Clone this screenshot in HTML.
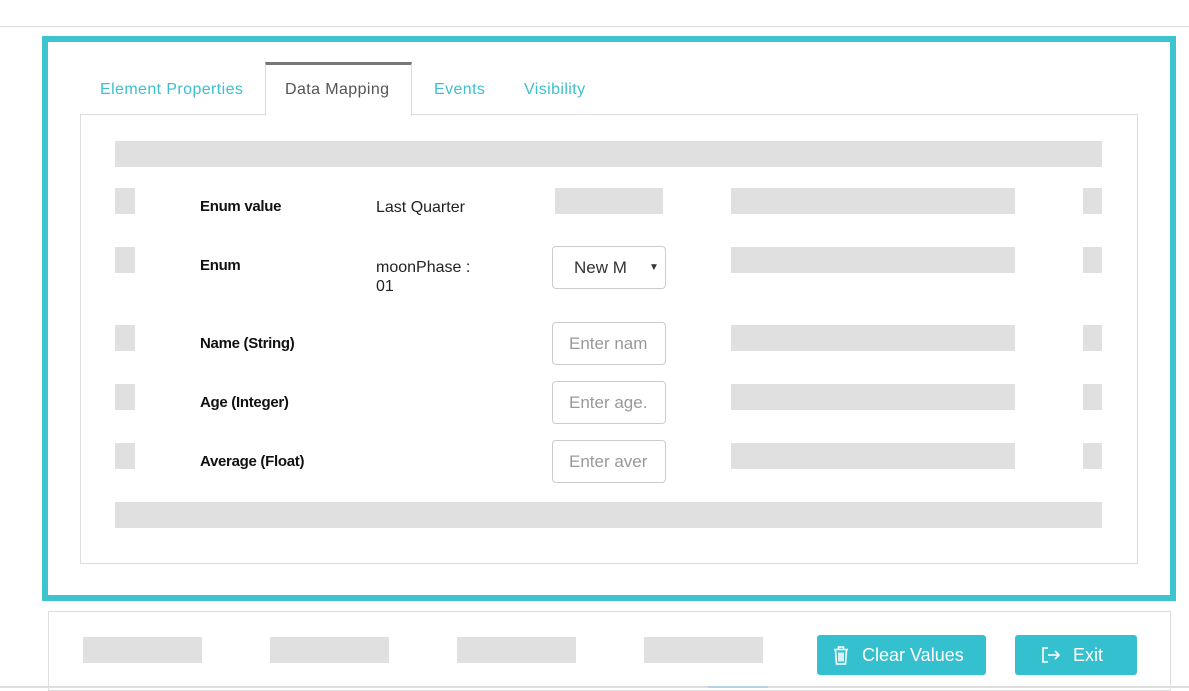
<!DOCTYPE html>
<html><head><style>
*{box-sizing:border-box;margin:0;padding:0}
body{width:1189px;height:688px;position:relative;background:#fff;font-family:"Liberation Sans","DejaVu Sans",sans-serif;overflow:hidden}
.a{position:absolute}
.g{position:absolute;background:#e0e0e0}
.lbl{position:absolute;font-size:15px;font-weight:bold;color:#111;letter-spacing:-0.3px}
.val{position:absolute;font-size:16px;color:#222}
.inp{position:absolute;left:552px;width:114px;height:43px;border:1px solid #ccc;border-radius:4px;font-size:17px;color:#999;padding:11px 0 0 16px;overflow:hidden;white-space:nowrap}
.tab{position:absolute;top:81px;font-size:16px;color:#3dbfcc;letter-spacing:0.4px}
.btn{position:absolute;background:#35c0d0;border-radius:3px;color:#fff;font-size:18px}
</style></head><body>
<div class="a" style="left:0;top:26px;width:1189px;height:1px;background:#ddd"></div>
<div class="a" style="left:42px;top:36px;width:1134px;height:565px;border:6px solid #3dc4ce"></div>
<div class="a" style="left:80px;top:114px;width:1058px;height:450px;border:1px solid #ddd"></div>
<div class="a" style="left:265px;top:62px;width:147px;height:54px;background:#fff;border:1px solid #ddd;border-top:3px solid #777;border-bottom:none"></div>
<div class="tab" style="left:100px">Element Properties</div>
<div class="tab" style="left:285px;color:#555">Data Mapping</div>
<div class="tab" style="left:434px">Events</div>
<div class="tab" style="left:524px">Visibility</div>

<div class="g" style="left:115px;top:141px;width:987px;height:26px"></div>
<div class="g" style="left:115px;top:502px;width:987px;height:26px"></div>

<div class="g" style="left:115px;top:188px;width:20px;height:26px"></div>
<div class="g" style="left:555px;top:188px;width:108px;height:26px"></div>
<div class="g" style="left:731px;top:188px;width:284px;height:26px"></div>
<div class="g" style="left:1083px;top:188px;width:19px;height:26px"></div>
<div class="lbl" style="left:200px;top:198px">Enum value</div>
<div class="val" style="left:376px;top:199px">Last Quarter</div>

<div class="g" style="left:115px;top:247px;width:20px;height:26px"></div>
<div class="g" style="left:731px;top:247px;width:284px;height:26px"></div>
<div class="g" style="left:1083px;top:247px;width:19px;height:26px"></div>
<div class="lbl" style="left:200px;top:257px">Enum</div>
<div class="val" style="left:376px;top:258px;line-height:19px">moonPhase :<br>01</div>
<div class="inp" style="top:246px;color:#333;padding-left:21px"><span style="display:inline-block;width:56px;overflow:hidden">New M</span><span style="position:absolute;left:96px;top:15px;font-size:10px">▼</span></div>

<div class="g" style="left:115px;top:325px;width:20px;height:26px"></div>
<div class="g" style="left:731px;top:325px;width:284px;height:26px"></div>
<div class="g" style="left:1083px;top:325px;width:19px;height:26px"></div>
<div class="lbl" style="left:200px;top:335px">Name (String)</div>
<div class="inp" style="top:322px">Enter nam</div>

<div class="g" style="left:115px;top:384px;width:20px;height:26px"></div>
<div class="g" style="left:731px;top:384px;width:284px;height:26px"></div>
<div class="g" style="left:1083px;top:384px;width:19px;height:26px"></div>
<div class="lbl" style="left:200px;top:394px">Age (Integer)</div>
<div class="inp" style="top:381px">Enter age.</div>

<div class="g" style="left:115px;top:443px;width:20px;height:26px"></div>
<div class="g" style="left:731px;top:443px;width:284px;height:26px"></div>
<div class="g" style="left:1083px;top:443px;width:19px;height:26px"></div>
<div class="lbl" style="left:200px;top:453px">Average (Float)</div>
<div class="inp" style="top:440px">Enter aver</div>

<div class="a" style="left:48px;top:611px;width:1123px;height:80px;border:1px solid #ddd"></div>
<div class="g" style="left:83px;top:637px;width:119px;height:26px"></div>
<div class="g" style="left:270px;top:637px;width:119px;height:26px"></div>
<div class="g" style="left:457px;top:637px;width:119px;height:26px"></div>
<div class="g" style="left:644px;top:637px;width:119px;height:26px"></div>
<div class="btn" style="left:817px;top:635px;width:169px;height:40px">
<svg class="a" style="left:16px;top:11px" width="16" height="19" viewBox="0 0 16 19" fill="none" stroke="#fff" stroke-width="1.6"><path d="M1 3.5h14M5.5 3V1h5v2M2.5 4l1 14h9l1-14M6 6.5v9M8 6.5v9M10 6.5v9"/></svg>
<span class="a" style="left:45px;top:10px">Clear Values</span></div>
<div class="btn" style="left:1015px;top:635px;width:122px;height:40px">
<svg class="a" style="left:26px;top:12px" width="20" height="16" viewBox="0 0 20 16" fill="none" stroke="#fff" stroke-width="1.6"><path d="M7 1H2v14h5M7 8h11M14 4l4 4-4 4"/></svg>
<span class="a" style="left:58px;top:10px">Exit</span></div>
<div class="a" style="left:0;top:686px;width:1189px;height:2px;background:#ddd"></div>
<div class="a" style="left:708px;top:686px;width:60px;height:2px;background:#b8d4e4"></div>
</body></html>
